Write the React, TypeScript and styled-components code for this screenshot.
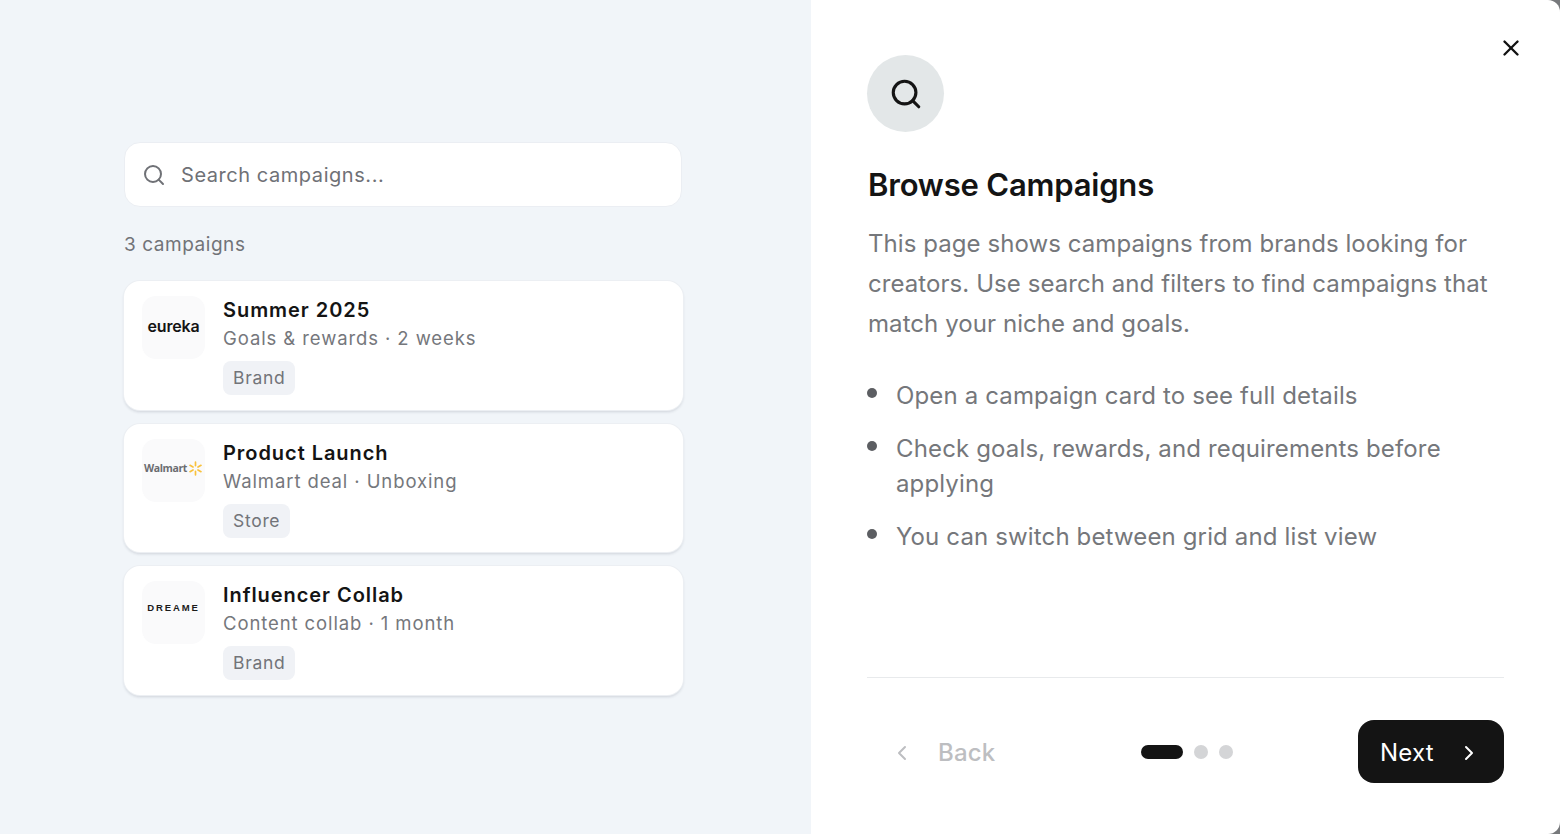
import { FC, ReactNode } from 'react'
import styled, { createGlobalStyle } from 'styled-components'
import { ChevronLeft, ChevronRight, Search, X } from 'lucide-react'

const GlobalStyle = createGlobalStyle`
  html, body {
    margin: 0;
    padding: 0;
    height: 100%;
    background: #77797c;
  }
  body {
    font-family: Inter, "Liberation Sans", sans-serif;
    -webkit-font-smoothing: antialiased;
  }
  * {
    box-sizing: border-box;
  }
`

const Modal = styled.div`
  display: grid;
  grid-template-columns: 811px 749px;
  width: 1560px;
  height: 834px;
  border-radius: 0 12px 12px 0;
  overflow: hidden;
`

const Preview = styled.section`
  display: flex;
  flex-direction: column;
  padding: 142px 128px 0 124px;
  background: #f1f5f9;
`

const SearchBox = styled.div`
  display: flex;
  align-items: center;
  gap: 15px;
  width: 558px;
  height: 65px;
  padding: 1px 17px 0;
  background: #fff;
  border: 1px solid #ebeef3;
  border-radius: 16px;
  color: #6f7176;
  font-size: 20px;
  letter-spacing: 0.55px;
`

const Count = styled.div`
  margin: 26px 0 24px;
  color: #717378;
  font-size: 19px;
  line-height: 24px;
  letter-spacing: 0.55px;
`

const CardList = styled.div`
  display: flex;
  flex-direction: column;
  gap: 14px;
  width: 559px;
`

const Card = styled.article`
  display: flex;
  gap: 18px;
  height: 128.6px;
  padding: 15px 18px;
  background: #fff;
  border-radius: 16px;
  box-shadow: 0 0 0 1px #eceff3, 0 2px 3px rgba(30, 40, 60, 0.16);
`

const LogoTile = styled.div`
  display: flex;
  flex: none;
  align-items: center;
  justify-content: center;
  width: 63px;
  height: 63px;
  background: #fafafb;
  border-radius: 14px;
`

const CardBody = styled.div`
  display: flex;
  flex-direction: column;
  align-items: flex-start;
`

const CardTitle = styled.div`
  color: #141414;
  font-size: 20px;
  font-weight: 600;
  line-height: 28px;
  letter-spacing: 0.95px;
`

const CardMeta = styled.div`
  color: #75777c;
  font-size: 18.5px;
  line-height: 28px;
  letter-spacing: 0.9px;
`

const Tag = styled.span`
  margin-top: 9px;
  padding: 0 10px;
  height: 34px;
  background: #f0f2f6;
  border-radius: 8px;
  color: #727479;
  font-size: 17.5px;
  line-height: 34px;
  letter-spacing: 0.7px;
`

const EurekaMark = styled.span`
  margin-top: -4px;
  color: #141414;
  font-size: 16px;
  font-weight: 600;
  letter-spacing: -0.2px;
`

const WalmartMark = styled.span`
  display: flex;
  align-items: center;
  gap: 1px;
  margin-top: -4px;
  color: #6a6c70;
  font-family: "Open Sans", sans-serif;
  font-size: 10.5px;
  font-weight: 700;
  letter-spacing: -0.4px;
`

const DreameMark = styled.span`
  margin-top: -10px;
  color: #1b1b1b;
  font-family: "Liberation Sans", sans-serif;
  font-size: 9.5px;
  font-weight: 700;
  letter-spacing: 1.9px;
`

const Guide = styled.section`
  position: relative;
  display: flex;
  flex-direction: column;
  padding: 55px 56px 51px;
  background: #fff;
`

const CloseButton = styled.button`
  position: absolute;
  top: 35px;
  right: 36px;
  display: flex;
  padding: 0;
  background: none;
  border: 0;
  color: #111;
`

const IconCircle = styled.div`
  display: flex;
  align-items: center;
  justify-content: center;
  width: 77px;
  height: 77px;
  background: #e3e7e8;
  border-radius: 50%;
  color: #141414;
`

const Heading = styled.h1`
  margin: 35px 0 0 1px;
  color: #141414;
  font-size: 31px;
  font-weight: 600;
  line-height: 36px;
  letter-spacing: -0.2px;
`

const Intro = styled.p`
  margin: 21px 0 0 1px;
  color: #75777b;
  font-size: 24px;
  line-height: 40px;
  letter-spacing: 0.07px;
`

const Bullets = styled.ul`
  display: flex;
  flex-direction: column;
  gap: 18px;
  margin: 34px 0 0;
  padding: 0;
  list-style: none;
`

const Bullet = styled.li`
  display: flex;
  gap: 19px;
  color: #75777b;
  font-size: 24px;
  line-height: 35px;
  letter-spacing: 0.14px;

  &::before {
    content: '';
    flex: none;
    width: 10px;
    height: 10px;
    margin-top: 9.5px;
    background: #5c5e62;
    border-radius: 50%;
  }
`

const Footer = styled.footer`
  display: grid;
  grid-template-columns: 1fr auto 1fr;
  align-items: center;
  margin-top: auto;
  padding-top: 42px;
  border-top: 1px solid #e8eaec;
`

const BackButton = styled.button`
  display: flex;
  align-items: center;
  gap: 24px;
  padding: 2px 0 0 23px;
  background: none;
  border: 0;
  color: #bdbec1;
  font: inherit;
  font-size: 24px;
  font-weight: 500;
  letter-spacing: 0.2px;
`

const Dots = styled.div`
  display: flex;
  gap: 11px;
  padding-left: 3px;
`

const Dot = styled.span<{ $active?: boolean }>`
  width: ${(p) => (p.$active ? '42px' : '14px')};
  height: 14px;
  background: ${(p) => (p.$active ? '#141414' : '#d4d5d7')};
  border-radius: 7px;
`

const NextButton = styled.button`
  display: flex;
  align-items: center;
  justify-self: end;
  gap: 23px;
  width: 146px;
  height: 63px;
  padding: 2px 0 0 22px;
  background: #141414;
  border: 0;
  border-radius: 16px;
  color: #fff;
  font: inherit;
  font-size: 24px;
  font-weight: 400;
  letter-spacing: 0.2px;
`

const Spark = () => (
  <svg width="15" height="15" viewBox="0 0 15 15" fill="none" stroke="#f9c23c" strokeWidth="1.7" strokeLinecap="round">
    <path d="M7.5 1.2v3.4M7.5 10.4v3.4M2 4.3l3 1.7M10 9l3 1.7M2 10.7L5 9M10 6l3-1.7" />
  </svg>
)

interface ICampaign {
  logo: ReactNode
  title: string
  meta: string
  tag: string
}

const campaigns: ICampaign[] = [
  { logo: <EurekaMark>eureka</EurekaMark>, title: 'Summer 2025', meta: 'Goals & rewards · 2 weeks', tag: 'Brand' },
  {
    logo: (
      <WalmartMark>
        Walmart
        <Spark />
      </WalmartMark>
    ),
    title: 'Product Launch',
    meta: 'Walmart deal · Unboxing',
    tag: 'Store',
  },
  { logo: <DreameMark>DREAME</DreameMark>, title: 'Influencer Collab', meta: 'Content collab · 1 month', tag: 'Brand' },
]

const CampaignCard: FC<ICampaign> = ({ logo, title, meta, tag }) => (
  <Card>
    <LogoTile>{logo}</LogoTile>
    <CardBody>
      <CardTitle>{title}</CardTitle>
      <CardMeta>{meta}</CardMeta>
      <Tag>{tag}</Tag>
    </CardBody>
  </Card>
)

export default function App() {
  return (
    <>
      <GlobalStyle />
      <Modal>
        <Preview>
          <SearchBox>
            <Search size={24} strokeWidth={2} />
            Search campaigns...
          </SearchBox>
          <Count>3 campaigns</Count>
          <CardList>
            {campaigns.map((c) => (
              <CampaignCard key={c.title} {...c} />
            ))}
          </CardList>
        </Preview>
        <Guide>
          <CloseButton>
            <X size={26} strokeWidth={2.2} />
          </CloseButton>
          <IconCircle>
            <Search size={34} strokeWidth={2.2} />
          </IconCircle>
          <Heading>Browse Campaigns</Heading>
          <Intro>
            This page shows campaigns from brands looking for creators. Use search and filters to find campaigns that
            match your niche and goals.
          </Intro>
          <Bullets>
            <Bullet>Open a campaign card to see full details</Bullet>
            <Bullet>Check goals, rewards, and requirements before applying</Bullet>
            <Bullet>You can switch between grid and list view</Bullet>
          </Bullets>
          <Footer>
            <BackButton>
              <ChevronLeft size={24} strokeWidth={2} />
              Back
            </BackButton>
            <Dots>
              <Dot $active />
              <Dot />
              <Dot />
            </Dots>
            <NextButton>
              Next
              <ChevronRight size={24} strokeWidth={2} />
            </NextButton>
          </Footer>
        </Guide>
      </Modal>
    </>
  )
}
